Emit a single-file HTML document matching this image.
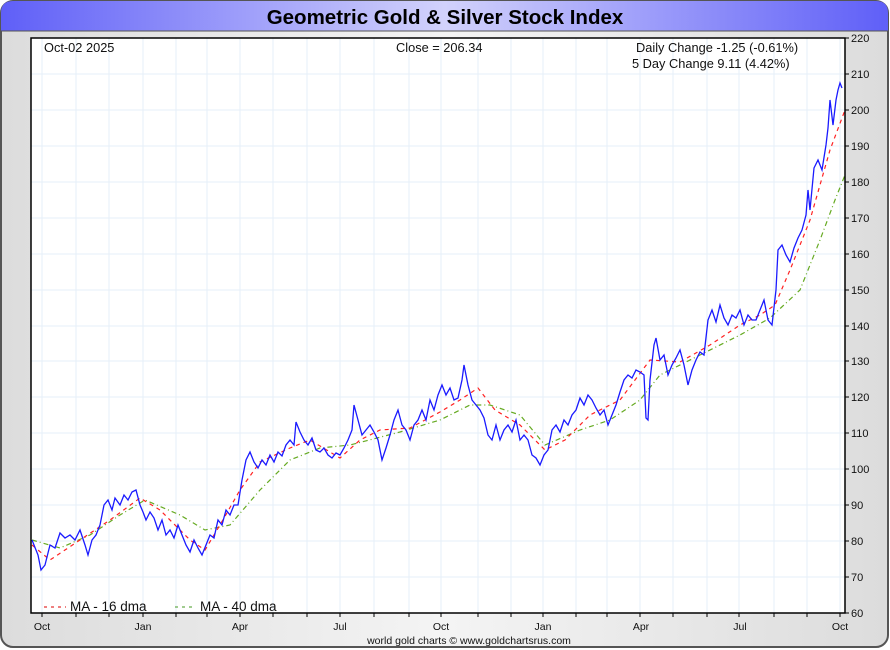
<!DOCTYPE html>
<html><head><meta charset="utf-8"><style>
html,body{margin:0;padding:0;background:#fff;}
svg{display:block;font-family:"Liberation Sans",sans-serif;}
</style></head><body>
<svg width="890" height="650" viewBox="0 0 890 650" xmlns="http://www.w3.org/2000/svg">
<defs>
<linearGradient id="tb" x1="0" x2="1" y1="0" y2="0">
<stop offset="0" stop-color="#5f5ff8"/><stop offset="0.5" stop-color="#d2d2fb"/><stop offset="1" stop-color="#5f5ff8"/></linearGradient>
<linearGradient id="bg" x1="0" x2="1" y1="0" y2="0">
<stop offset="0" stop-color="#dcdcdc"/><stop offset="0.5" stop-color="#f4f4f4"/><stop offset="1" stop-color="#dcdcdc"/></linearGradient>
</defs>
<rect x="1" y="1" width="887" height="646" rx="12" fill="url(#bg)" stroke="#555" stroke-width="2"/>
<path d="M1 31 V13 Q1 1 13 1 H876 Q888 1 888 13 V31 Z" fill="url(#tb)"/>
<line x1="1" y1="31" x2="888" y2="31" stroke="#555" stroke-width="1"/>
<text x="445" y="24" text-anchor="middle" font-size="20.5" font-weight="bold" fill="#000">Geometric Gold &amp; Silver Stock Index</text>
<rect x="31" y="38" width="814" height="575" fill="#fff"/>
<g stroke="#e6eff8" stroke-width="1">
<line x1="42" y1="38" x2="42" y2="613"/><line x1="76" y1="38" x2="76" y2="613"/><line x1="109" y1="38" x2="109" y2="613"/><line x1="143" y1="38" x2="143" y2="613"/><line x1="176" y1="38" x2="176" y2="613"/><line x1="207" y1="38" x2="207" y2="613"/><line x1="240" y1="38" x2="240" y2="613"/><line x1="273" y1="38" x2="273" y2="613"/><line x1="307" y1="38" x2="307" y2="613"/><line x1="340" y1="38" x2="340" y2="613"/><line x1="374" y1="38" x2="374" y2="613"/><line x1="409" y1="38" x2="409" y2="613"/><line x1="441" y1="38" x2="441" y2="613"/><line x1="478" y1="38" x2="478" y2="613"/><line x1="511" y1="38" x2="511" y2="613"/><line x1="543" y1="38" x2="543" y2="613"/><line x1="576" y1="38" x2="576" y2="613"/><line x1="607" y1="38" x2="607" y2="613"/><line x1="640" y1="38" x2="640" y2="613"/><line x1="673" y1="38" x2="673" y2="613"/><line x1="707" y1="38" x2="707" y2="613"/><line x1="739" y1="38" x2="739" y2="613"/><line x1="774" y1="38" x2="774" y2="613"/><line x1="807" y1="38" x2="807" y2="613"/><line x1="840" y1="38" x2="840" y2="613"/>
<line x1="31" y1="74" x2="845" y2="74"/><line x1="31" y1="110" x2="845" y2="110"/><line x1="31" y1="146" x2="845" y2="146"/><line x1="31" y1="182" x2="845" y2="182"/><line x1="31" y1="218" x2="845" y2="218"/><line x1="31" y1="254" x2="845" y2="254"/><line x1="31" y1="290" x2="845" y2="290"/><line x1="31" y1="326" x2="845" y2="326"/><line x1="31" y1="361" x2="845" y2="361"/><line x1="31" y1="397" x2="845" y2="397"/><line x1="31" y1="433" x2="845" y2="433"/><line x1="31" y1="469" x2="845" y2="469"/><line x1="31" y1="505" x2="845" y2="505"/><line x1="31" y1="541" x2="845" y2="541"/><line x1="31" y1="577" x2="845" y2="577"/>
</g>
<polyline fill="none" stroke="#66aa22" stroke-width="1.2" stroke-dasharray="5,3,1,3" points="32,540 60,548 90,535 120,515 145,500 180,515 205,530 230,525 260,490 290,460 320,448 350,445 400,432 440,420 470,405 490,405 520,415 545,445 580,430 610,420 640,400 660,375 700,355 740,335 770,318 800,290 820,240 835,200 845,175"/>
<polyline fill="none" stroke="#ff2222" stroke-width="1.2" stroke-dasharray="4,4" points="32,545 50,560 80,540 110,520 140,498 160,510 190,540 205,550 220,525 240,490 260,462 290,448 310,440 340,458 360,440 380,430 410,428 440,412 460,400 478,388 495,410 520,425 545,450 565,440 590,415 620,400 650,360 680,362 710,345 740,325 760,315 775,305 790,270 810,220 830,150 845,110"/>
<polyline fill="none" stroke="#1a1aff" stroke-width="1.3" points="32,540 38,555 41,570 45,565 50,545 55,548 60,533 65,538 70,535 75,540 80,530 85,545 88,555 92,540 96,535 100,525 104,505 108,500 112,510 115,498 120,505 124,495 128,500 132,492 136,490 140,505 143,512 146,520 150,512 154,518 158,530 162,520 166,535 170,530 174,538 178,525 182,535 186,545 190,552 194,540 198,548 202,555 206,545 210,535 214,538 218,520 222,525 226,510 230,515 234,505 238,505 242,480 246,460 250,452 254,462 258,468 262,460 266,465 270,455 274,462 278,452 282,456 286,445 290,440 294,445 296,422 300,432 304,440 308,445 312,438 316,450 320,452 324,448 328,455 332,458 336,453 340,455 344,448 348,440 352,430 354,405 358,420 362,435 366,430 370,425 374,432 378,440 382,460 386,448 390,435 394,420 398,410 402,425 406,430 410,440 414,425 418,420 422,410 426,420 430,400 434,410 438,395 442,385 446,395 450,388 454,400 458,398 462,380 464,365 468,385 472,400 476,405 480,410 484,418 488,435 492,440 496,425 500,440 504,430 508,425 512,432 516,420 520,440 524,435 528,440 532,455 536,458 540,465 544,455 548,450 552,430 556,425 560,432 564,420 568,425 572,415 576,410 580,398 584,405 588,395 592,400 596,408 600,415 604,410 608,425 612,415 616,405 620,392 624,380 628,375 632,378 636,370 640,372 644,375 646,418 648,420 650,380 654,345 656,338 660,360 664,355 668,375 672,365 676,358 680,350 684,365 688,385 692,370 696,360 700,352 704,355 708,320 712,310 716,322 720,305 724,318 728,325 732,315 736,318 740,310 744,325 748,315 752,320 756,320 760,310 764,300 768,320 772,325 776,290 778,250 782,245 786,255 790,262 794,248 798,238 802,230 806,215 808,190 810,210 814,168 818,160 822,170 826,145 828,128 830,100 833,125 836,100 838,90 840,83 842,88"/>
<rect x="31" y="38" width="814" height="575" fill="none" stroke="#000" stroke-width="1.5"/>
<g stroke="#000" stroke-width="1">
<line x1="845" y1="38" x2="849" y2="38"/><line x1="845" y1="74" x2="849" y2="74"/><line x1="845" y1="110" x2="849" y2="110"/><line x1="845" y1="146" x2="849" y2="146"/><line x1="845" y1="182" x2="849" y2="182"/><line x1="845" y1="218" x2="849" y2="218"/><line x1="845" y1="254" x2="849" y2="254"/><line x1="845" y1="290" x2="849" y2="290"/><line x1="845" y1="326" x2="849" y2="326"/><line x1="845" y1="361" x2="849" y2="361"/><line x1="845" y1="397" x2="849" y2="397"/><line x1="845" y1="433" x2="849" y2="433"/><line x1="845" y1="469" x2="849" y2="469"/><line x1="845" y1="505" x2="849" y2="505"/><line x1="845" y1="541" x2="849" y2="541"/><line x1="845" y1="577" x2="849" y2="577"/><line x1="845" y1="613" x2="849" y2="613"/>
<line x1="42" y1="613" x2="42" y2="617"/><line x1="76" y1="613" x2="76" y2="617"/><line x1="109" y1="613" x2="109" y2="617"/><line x1="143" y1="613" x2="143" y2="617"/><line x1="176" y1="613" x2="176" y2="617"/><line x1="207" y1="613" x2="207" y2="617"/><line x1="240" y1="613" x2="240" y2="617"/><line x1="273" y1="613" x2="273" y2="617"/><line x1="307" y1="613" x2="307" y2="617"/><line x1="340" y1="613" x2="340" y2="617"/><line x1="374" y1="613" x2="374" y2="617"/><line x1="409" y1="613" x2="409" y2="617"/><line x1="441" y1="613" x2="441" y2="617"/><line x1="478" y1="613" x2="478" y2="617"/><line x1="511" y1="613" x2="511" y2="617"/><line x1="543" y1="613" x2="543" y2="617"/><line x1="576" y1="613" x2="576" y2="617"/><line x1="607" y1="613" x2="607" y2="617"/><line x1="640" y1="613" x2="640" y2="617"/><line x1="673" y1="613" x2="673" y2="617"/><line x1="707" y1="613" x2="707" y2="617"/><line x1="739" y1="613" x2="739" y2="617"/><line x1="774" y1="613" x2="774" y2="617"/><line x1="807" y1="613" x2="807" y2="617"/><line x1="840" y1="613" x2="840" y2="617"/>
</g>
<g font-size="11" fill="#111">
<text x="851" y="42">220</text><text x="851" y="78">210</text><text x="851" y="114">200</text><text x="851" y="150">190</text><text x="851" y="186">180</text><text x="851" y="222">170</text><text x="851" y="258">160</text><text x="851" y="294">150</text><text x="851" y="330">140</text><text x="851" y="365">130</text><text x="851" y="401">120</text><text x="851" y="437">110</text><text x="851" y="473">100</text><text x="851" y="509">90</text><text x="851" y="545">80</text><text x="851" y="581">70</text><text x="851" y="617">60</text>
</g>
<g font-size="10.5" fill="#111" text-anchor="middle">
<text x="42" y="630">Oct</text><text x="143" y="630">Jan</text><text x="240" y="630">Apr</text><text x="340" y="630">Jul</text><text x="441" y="630">Oct</text><text x="543" y="630">Jan</text><text x="641" y="630">Apr</text><text x="740" y="630">Jul</text><text x="840" y="630">Oct</text>
</g>
<text x="469" y="644" text-anchor="middle" font-size="10.5" fill="#111">world gold charts © www.goldchartsrus.com</text>
<g font-size="12.8" fill="#111">
<text x="44" y="52">Oct-02  2025</text>
<text x="396" y="52">Close = 206.34</text>
<text x="636" y="52">Daily Change -1.25 (-0.61%)</text>
<text x="632" y="68">5 Day Change 9.11 (4.42%)</text>
<text x="70" y="611" font-size="13.5">MA - 16 dma</text>
<text x="200" y="611" font-size="13.5">MA - 40 dma</text>
</g>
<line x1="44" y1="607" x2="66" y2="607" stroke="#dd0000" stroke-width="1" stroke-dasharray="3,4"/>
<line x1="175" y1="607" x2="196" y2="607" stroke="#449922" stroke-width="1" stroke-dasharray="3,4"/>
</svg>
</body></html>
